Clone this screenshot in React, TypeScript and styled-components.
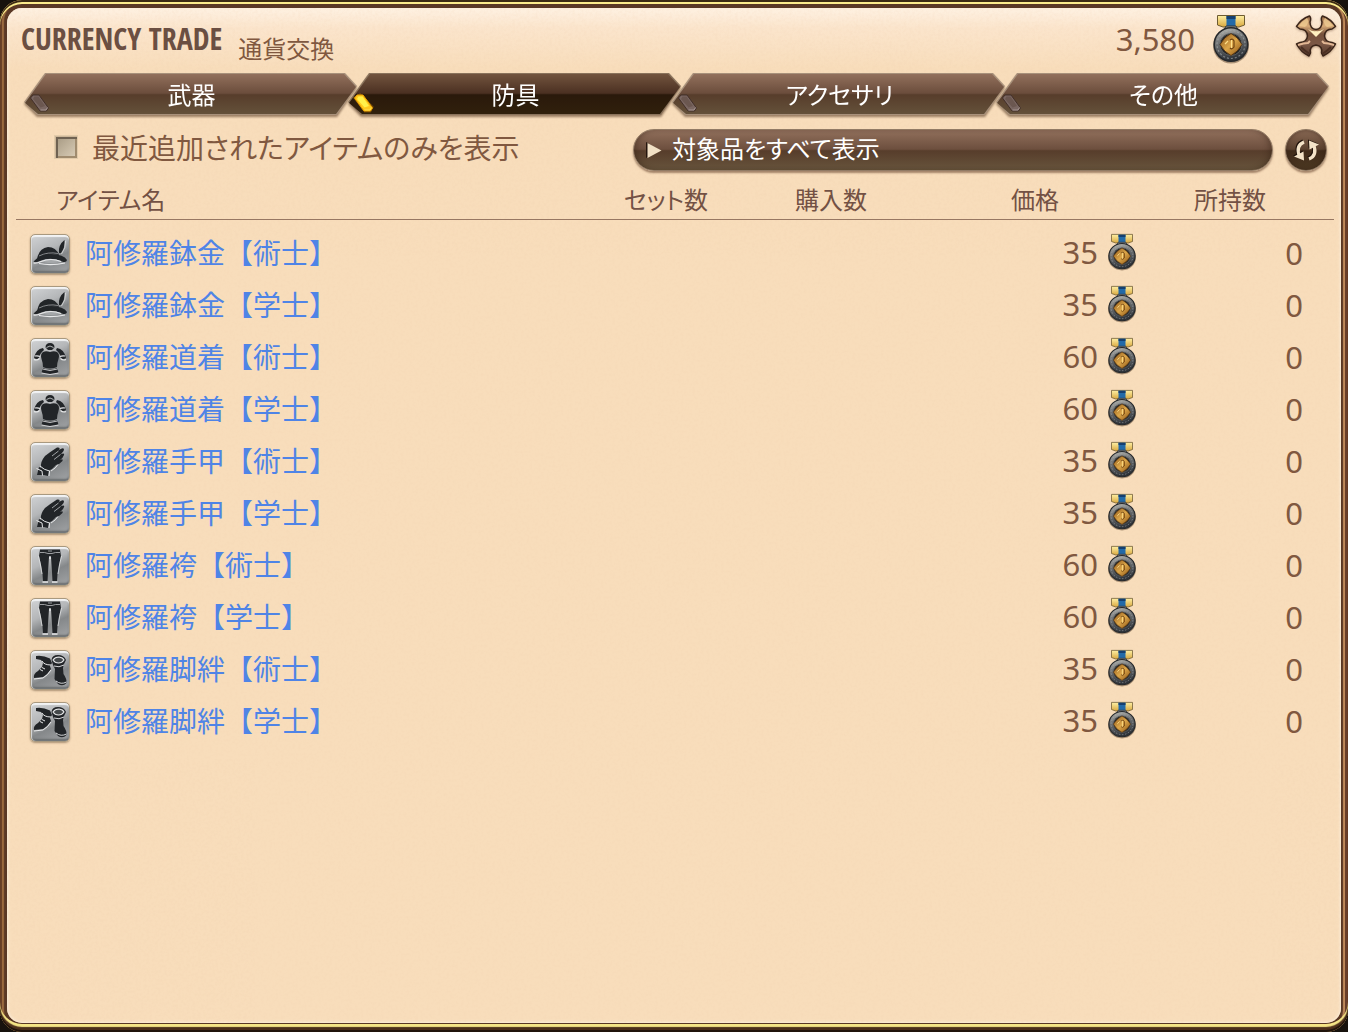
import React, { useState } from 'react';
import styled, { createGlobalStyle } from 'styled-components';

const CJK = '"Noto Sans CJK JP", "Noto Sans", sans-serif';

const GlobalStyle = createGlobalStyle`
  * { box-sizing: border-box; }
  body { margin: 0; background: #17120d; font-family: ${CJK}; font-weight: 400; color: #805840; }
  button, select, input { font: inherit; color: inherit; margin: 0; }
`;

const Frame = styled.div`
  display: flex;
  min-height: 100vh;
  padding: 8px 7px 9px;
  border-radius: 22px;
  background: #5a3825;
  box-shadow:
    inset 0 2px 0 #3b2a14,
    inset 0 -2px 0 #20140c,
    inset 0 4px 0 #fbeb8c,
    inset 0 -5px 1px #4b2e1b,
    inset 0 -8px 0 #f6e687,
    inset 2px 0 0 #6a4128,
    inset -3px 0 0 #6a3f2a,
    inset 4px 0 1px #9a6a3f,
    inset -5px 0 1px #c08a5a;
`;

const Panel = styled.main`
  position: relative;
  flex: 1;
  min-width: 0;
  border-radius: 15px;
  overflow: hidden;
  background: linear-gradient(#fef1e2 0, #fbe5cc 20px, #f8ddbb 60px);
  box-shadow: inset 0 0 3px 1px #fbeedb;
`;

const Grain = styled.svg`
  position: absolute;
  inset: 0;
  width: 100%;
  height: 100%;
  pointer-events: none;
`;

const Header = styled.header`
  position: relative;
  display: flex;
  align-items: center;
  height: 65px;
  padding: 0 4px 4px 14px;
`;

const Title = styled.h1`
  margin: 0;
  font: 700 30px/48px "Open Sans Condensed", "Roboto Condensed", "Open Sans", sans-serif;
  color: #6b4f42;
`;

const Subtitle = styled.p`
  margin: 0 auto 0 16px;
  padding-top: 18px;
  font-size: 24px;
  line-height: 32px;
`;

const Balance = styled.output`
  display: flex;
  align-items: center;
  gap: 18px;
  font: 400 31px/40px "Noto Sans", sans-serif;
`;

const CloseButton = styled.button`
  display: grid;
  place-items: center;
  width: 42px;
  height: 42px;
  margin: 0 0 6px 46px;
  padding: 0;
  border: 0;
  background: none;
  filter: drop-shadow(0 1px 1px #6b4a3380);
`;

const Tabs = styled.div`
  position: relative;
  display: flex;
  padding: 0 12px 0 17px;
`;

const TabSlot = styled.div`
  flex: 1;
  min-width: 0;
  filter: drop-shadow(0 2px 1px #5a3d2899);
  & + & { margin-left: -9px; }
`;

const Tab = styled.button<{ $active: boolean }>`
  --shape: polygon(21px 0, calc(100% - 12px) 0, 100% 13px, calc(100% - 20px) 100%, 13px 100%, 0 29px);
  position: relative;
  display: block;
  width: 100%;
  height: 42px;
  padding: 0 0 0 2px;
  border: 0;
  color: #fff;
  font-size: 24px;
  line-height: 42px;
  font-feature-settings: "palt";
  background: ${p => (p.$active ? '#8a735c' : '#a8917b')};
  clip-path: var(--shape);
  isolation: isolate;

  &::before {
    content: '';
    position: absolute;
    z-index: -1;
    inset: 1px;
    clip-path: var(--shape);
    background: ${p => p.$active
      ? 'linear-gradient(#72543e, #4b3022 48%, #2a190b 52%, #30200c)'
      : 'linear-gradient(#92705c, #6b4d3c 48%, #573d2b 52%, #64513a)'};
  }
`;

const Gem = styled.svg`
  position: absolute;
  left: 4px;
  top: 18px;
`;

const Filters = styled.div`
  position: relative;
  display: grid;
  grid-template-columns: minmax(0, 567fr) minmax(0, 640fr) 42px;
  column-gap: 12px;
  align-items: center;
  padding: 14px 14px 0 47px;
`;

const CheckLabel = styled.label`
  display: flex;
  align-items: center;
  gap: 14px;
  padding-bottom: 6px;
  font-size: 28px;
  line-height: 36px;
  font-feature-settings: "palt";
  white-space: nowrap;
`;

const Check = styled.input`
  appearance: none;
  width: 24px;
  height: 24px;
  border: 1px solid #e2cbaa;
  background: linear-gradient(135deg, #a3967f, #dccfb9);
  box-shadow: inset 1px 1px 0 #cdb799, inset 3px 3px 0 #6f6252, inset -2px -2px 0 #a08b6e;
  &:checked { background: #6b4f42; }
`;

const Picker = styled.div`
  position: relative;
`;

const Select = styled.select`
  appearance: none;
  display: block;
  width: 100%;
  height: 42px;
  padding: 0 20px 4px 38px;
  border: 1px solid #927b65;
  border-radius: 21px;
  color: #fff;
  font-size: 24px;
  line-height: 36px;
  font-feature-settings: "palt";
  background: linear-gradient(#91705c, #6d4f3e 48%, #573d2b 52%, #67543c);
  box-shadow: 0 2px 2px #6b4a3399, inset 5px 0 6px -3px #2e1b1066, inset -5px 0 6px -3px #2e1b1066;
`;

const Arrow = styled.svg`
  position: absolute;
  left: 12px;
  top: 12px;
  pointer-events: none;
`;

const RefreshButton = styled.button`
  width: 42px;
  height: 42px;
  padding: 0;
  border: 1px solid #8d7660;
  border-radius: 50%;
  background: linear-gradient(#8a6a55, #5b412f 48%, #412b1a 52%, #4b3822);
  box-shadow: 0 2px 2px #6b4a3399, inset 0 0 4px #2e1b1088;
`;

const Table = styled.table`
  position: relative;
  table-layout: fixed;
  width: calc(100% - 16px);
  margin: 8px 7px 0 9px;
  border-spacing: 0;

  tbody::before { content: ''; display: block; height: 8px; }
`;

const Th = styled.th<{ $w?: number; $align?: string; $pad?: string }>`
  width: ${p => (p.$w ? `${p.$w}px` : 'auto')};
  padding: ${p => p.$pad ?? '0'};
  border-bottom: 1px solid #977762;
  text-align: ${p => p.$align ?? 'center'};
  font-size: 24px;
  line-height: 40px;
  font-weight: 400;
  font-feature-settings: "palt";
  color: #735144;
`;

const Td = styled.td`
  height: 52px;
  padding: 0;
  vertical-align: middle;
`;

const Item = styled.div`
  display: flex;
  align-items: center;
  gap: 15px;
  padding-left: 14px;
`;

const ItemLink = styled.a`
  padding-bottom: 4px;
  color: #4f84e6;
  font-size: 28px;
  line-height: 36px;
  text-decoration: none;
  white-space: nowrap;
`;

const Tile = styled.span`
  display: block;
  width: 40px;
  height: 40px;
  border: 1px solid #a9997f;
  border-radius: 5px;
  background: linear-gradient(155deg, #d2d4d6 0, #b4b6b8 40%, #85888a 62%, #a2a4a6 100%);
  box-shadow: inset 0 2px 1px #f3f4f5, inset 1px 0 1px #d9dadb, inset 0 -2px 2px #666a6c, 0 1px 2px #6b523a88;
  svg { display: block; width: 38px; height: 38px; }
`;

const Price = styled.div`
  display: flex;
  align-items: center;
  justify-content: flex-end;
  gap: 10px;
  padding: 0 22px 4px 0;
  font: 400 31px/40px "Noto Sans", sans-serif;
`;

const Owned = styled.div`
  padding: 0 31px 2px 0;
  text-align: right;
  font: 400 31px/40px "Noto Sans", sans-serif;
`;

function Medal({ w, h }: { w: number; h: number }) {
  return (
    <svg width={w} height={h} viewBox="0 0 36 48" preserveAspectRatio="none" aria-hidden="true" overflow="visible">
      <defs>
        <linearGradient id="rim" x1="0" y1="0" x2="0.3" y2="1">
          <stop offset="0" stopColor="#c2c2bb" /><stop offset="0.4" stopColor="#77797a" /><stop offset="1" stopColor="#2e3339" />
        </linearGradient>
        <linearGradient id="gold" x1="0" y1="0" x2="1" y2="1">
          <stop offset="0" stopColor="#8b5417" /><stop offset="0.5" stopColor="#dca649" /><stop offset="1" stopColor="#8a5212" />
        </linearGradient>
        <linearGradient id="ribbon" x1="0" x2="0" y1="0" y2="1">
          <stop offset="0" stopColor="#fff0a4" /><stop offset="1" stopColor="#d9a83e" />
        </linearGradient>
      </defs>
      <ellipse cx="18" cy="31" rx="18" ry="17.5" fill="#4a321f" opacity="0.45" />
      <path d="M4.500 0.500H31.500V10L26 12H10L4.500 10Z" fill="url(#ribbon)" stroke="#6d5b32" strokeWidth="1" />
      <path d="M13.500 1H22.500V12H13.500Z" fill="#236aa8" />
      <path d="M13.500 1H22.500V4H13.500Z" fill="#153f70" />
      <path d="M13 11h10l2 4H11Z" fill="#91948f" stroke="#343638" />
      <circle cx="18" cy="29.500" r="16.800" fill="url(#rim)" stroke="#25282b" strokeWidth="1.500" />
      <circle cx="18" cy="29.500" r="14" fill="none" stroke="#a9adae" strokeWidth="1.200" strokeDasharray="2 2" opacity="0.6" />
      <circle cx="18" cy="29.500" r="11" fill="#202326" stroke="#5c6062" strokeWidth="1" />
      <path d="M18 18.500Q25 22 29 29.500Q25 37 18 40.500Q11 37 7 29.500Q11 22 18 18.500Z" fill="url(#gold)" stroke="#4b2c0c" strokeWidth="0.800" strokeLinejoin="round" />
      <path d="M17 25q3-2 4 1v6q-2 3-4 1" fill="none" stroke="#6f4310" strokeWidth="1.200" />
      <path d="M18.500 25v8M12 29l3-3" stroke="#ffe08a" strokeWidth="1.200" />
    </svg>
  );
}

function CloseIcon() {
  return (
    <svg width="42" height="42" viewBox="0 0 42 42" aria-hidden="true">
      <defs>
        <linearGradient id="bronze" x1="0" y1="0" x2="0" y2="1">
          <stop offset="0" stopColor="#9a6d4a" /><stop offset="0.25" stopColor="#d8ab78" /><stop offset="0.45" stopColor="#76513b" /><stop offset="0.7" stopColor="#7a5745" /><stop offset="1" stopColor="#54382b" />
        </linearGradient>
      </defs>
      <path d="M14.500 1Q6 4 1.500 11.500L5 14Q12 14 12.500 21Q12 27 5 27.500L1.500 29Q6 37.500 14 41L15.500 38Q14 31 21 30Q28 31 26.500 38L28 41Q36 37.500 40.500 29L37 27.500Q30 27 29.500 21Q30 14 37 14L40.500 11.500Q36 4 27.500 1Q25.500 3 27 7Q27 14 21 14.500Q15 14 15 7Q16.500 3 14.500 1Z"
        fill="url(#bronze)" stroke="#3b2519" strokeWidth="1.500" strokeLinejoin="round" />
      <path d="M13 14L21 22L29 14Q24 17 21 16Q18 17 13 14Z" fill="#fff0c0" />
      <path d="M12 3Q7 6 4 11L10 12Q13 10 13.500 6ZM30 3Q35 6 38 11L32 12Q29 10 28.500 6Z" fill="#f1cf94" opacity="0.75" />
      <path d="M3 30Q9 28 13 28L15 26M39 30Q33 28 29 28L27 26" fill="none" stroke="#e2b794" strokeWidth="2" />
      <path d="M6 32Q10 36 14 38.500M36 32Q32 36 28 38.500" fill="none" stroke="#4a2f22" strokeWidth="2" />
    </svg>
  );
}

function RefreshArm() {
  return (
    <g>
      <path d="M18 12C12 14.500 11 20 13.500 26.500" fill="none" strokeWidth="3.200" />
      <path d="M8 26.500L18 30.500L17.500 21.500Z" strokeWidth="0" />
    </g>
  );
}

function RefreshIcon() {
  return (
    <svg width="40" height="40" viewBox="0 0 40 40" aria-hidden="true">
      {['#20130b', '#f4e3c8'].map((tone, i) => (
        <g key={tone} fill={tone} stroke={tone} transform={i === 0 ? 'translate(-1 -1)' : undefined}>
          <RefreshArm />
          <g transform="rotate(180 20.500 20.500)"><RefreshArm /></g>
        </g>
      ))}
    </svg>
  );
}

type Kind = 'hat' | 'body' | 'hands' | 'legs' | 'feet';

const INK = '#222528';
const SHINE = '#e8e9ea';

const art: Record<Kind, React.ReactNode> = {
  hat: (
    <>
      <path d="M6 24Q8 13 17 12Q25 12 28 20Q16 18 6 24Z" fill={INK} />
      <path d="M8 21Q17 16.500 27 18.500" fill="none" stroke="#9fa2a4" strokeWidth="0.800" />
      <path d="M2.500 26.500Q8 19.500 20 19Q33 19.500 36 25Q35.500 28 31 26.500Q20 21.500 9 26Q5 28 2.500 26.500Z" fill={INK} />
      <path d="M9 26.500Q20 22 31 26.500Q20 30 9 26.500Z" fill="#a4a7a9" />
      <path d="M2.500 28Q6 28.500 10 26.500Q20 22.500 30 26.500M8 28.500Q20 31 34 28" fill="none" stroke={SHINE} strokeWidth="1.100" />
      <path d="M28 18Q27 10 33.500 5Q34.500 12 30 18Z" fill={INK} />
      <path d="M30.500 19Q35 13 34.500 6" fill="none" stroke={SHINE} strokeWidth="0.700" />
    </>
  ),
  body: (
    <>
      <path d="M14.500 8.500Q14.500 4 19 4Q23.500 4 23.500 8.500L21 11H17Z" fill={INK} />
      <path d="M15.500 8.500Q19 5.500 22.500 8.500" fill="none" stroke="#b4b7b8" />
      <path d="M12 13Q15 11.500 19 13Q23 11.500 26 13Q29 15 27.500 20Q26 24 26 28Q19 31 12 28Q12 24 10.500 20Q9 15 12 13Z" fill={INK} />
      <path d="M12 9Q5 10 3 19Q6 21 8 19Q9 14 13 11ZM26 9Q33 10 35 19Q32 21 30 19Q29 14 25 11Z" fill={INK} />
      <path d="M3 20.500Q6 22 8.500 19.500M35 20.500Q32 22 29.500 19.500M4 17Q7 16.500 9 17.500M34 17Q31 16.500 29 17.500" fill="none" stroke={SHINE} strokeWidth="1.100" />
      <path d="M12 29Q19 32 26 29L27.500 33.500Q19 36.500 10.500 33.500Z" fill={INK} />
      <path d="M11.500 30Q19 33 26.500 30M10.500 34Q19 37 27.500 34" fill="none" stroke={SHINE} strokeWidth="0.800" />
    </>
  ),
  hands: (
    <>
      <path d="M10 25Q9 19 14 13Q19 9 26 4.500Q30 4 28 7Q32.500 4 33 6.500Q33 8 30 11Q34 9.500 33 12Q32 15 29 17Q32.500 15 31.500 18Q29 21 25 22Q22 26 17 28Z" fill={INK} />
      <path d="M27.500 8L21 13M29.500 11.500L23 16.500" fill="none" stroke="#aeb1b3" strokeWidth="0.900" />
      <path d="M8 24L18 28L17 33L13 32L6 32Z" fill={INK} />
      <path d="M5.500 25.500L11 28L11.500 32.500M9 23Q13 27 18.500 28L18 33M20 28Q25 25 27 21.500" fill="none" stroke={SHINE} strokeWidth="1" />
    </>
  ),
  legs: (
    <>
      <path d="M9 2.500H29L30 9L28 18L26.500 27L26 34.500H21.500L21 25L20 10H18L17 25L16.500 34.500H12L11.500 27L10 18L8 9Z" fill={INK} />
      <path d="M9 5.500Q14 5 17 6.500H21Q24 5 29 5.500M17 4H21" fill="none" stroke="#a9acae" strokeWidth="0.900" />
      <path d="M11.500 35H17M21 35H26.500M19 9V12" stroke={SHINE} strokeWidth="1.300" />
      <path d="M7.500 9L9.500 18L11 27M30.500 9L28.500 18L27 27" fill="none" stroke={SHINE} strokeWidth="0.700" />
    </>
  ),
  feet: (
    <>
      <path d="M5 5Q12 4 19 7.500L21 12L19 15L20 18Q17 23 12 26L3 27Q2 23 7 20L11 16L12 12L10 9L5 8Z" fill={INK} />
      <path d="M11 10Q13 14 20 14M3 28L12 27Q17 24 20 19M11 16.500L14 18M9 18.500L12 20" fill="none" stroke={SHINE} strokeWidth="1" />
      <path d="M20.500 9Q21 4 27 4Q33 4 35 9L33 13L32 17L32.500 23Q36 28 35.500 32Q32 36 27 33L23.500 28L24 18L22 14Z" fill={INK} />
      <path d="M22 9Q24 6 28 6Q32 6.500 33 9Q31 12 27.500 12Q24 12 22 9Z" fill="#44484a" stroke={SHINE} strokeWidth="1.100" />
      <path d="M23 15Q28 17 33 14M25 30Q30 34 35.500 31" fill="none" stroke={SHINE} strokeWidth="0.900" />
    </>
  ),
};

const items: { kind: Kind; name: string; price: number }[] = [
  { kind: 'hat', name: '阿修羅鉢金【術士】', price: 35 },
  { kind: 'hat', name: '阿修羅鉢金【学士】', price: 35 },
  { kind: 'body', name: '阿修羅道着【術士】', price: 60 },
  { kind: 'body', name: '阿修羅道着【学士】', price: 60 },
  { kind: 'hands', name: '阿修羅手甲【術士】', price: 35 },
  { kind: 'hands', name: '阿修羅手甲【学士】', price: 35 },
  { kind: 'legs', name: '阿修羅袴【術士】', price: 60 },
  { kind: 'legs', name: '阿修羅袴【学士】', price: 60 },
  { kind: 'feet', name: '阿修羅脚絆【術士】', price: 35 },
  { kind: 'feet', name: '阿修羅脚絆【学士】', price: 35 },
];

const tabs = ['武器', '防具', 'アクセサリ', 'その他'];

function TabGem({ lit }: { lit: boolean }) {
  return (
    <Gem width="26" height="24" viewBox="0 0 26 24" aria-hidden="true">
      {lit && <path d="M3 7L8 4L20 16L18 20H13Z" fill="#c57a05" opacity="0.4" stroke="#c57a05" strokeWidth="3" />}
      <path d="M2.500 7L5 4H11L20.500 17L18.500 20H12Z" fill={lit ? '#ffc81e' : '#7a6762'} stroke={lit ? '#e8a000' : '#43302a'} strokeWidth="1" strokeLinejoin="round" />
      <path d="M5 8L6.500 5.500H10.500L17 15L12.500 16.500Z" fill={lit ? '#fff04a' : '#6b5750'} />
      <path d="M12.500 19H18L19.500 16.500" fill="none" stroke={lit ? '#ffdf50' : '#a59590'} strokeWidth="1" />
    </Gem>
  );
}

export default function App() {
  const [active, setActive] = useState(1);
  return (
    <>
      <GlobalStyle />
      <Frame>
        <Panel>
          <Grain aria-hidden="true">
            <filter id="grain">
              <feTurbulence type="fractalNoise" baseFrequency="0.35" numOctaves="2" seed="4" />
              <feColorMatrix values="0 0 0 0 0.85  0 0 0 0 0.6  0 0 0 0 0.4  0.9 0 0 0 -0.38" />
            </filter>
            <rect width="100%" height="100%" filter="url(#grain)" opacity="0.35" />
          </Grain>
          <Header>
            <Title>CURRENCY TRADE</Title>
            <Subtitle>通貨交換</Subtitle>
            <Balance>3,580<Medal w={36} h={48} /></Balance>
            <CloseButton aria-label="閉じる"><CloseIcon /></CloseButton>
          </Header>
          <Tabs role="tablist">
            {tabs.map((name, i) => (
              <TabSlot key={name}>
                <Tab role="tab" aria-selected={i === active} $active={i === active} onClick={() => setActive(i)}>
                  <TabGem lit={i === active} />
                  {name}
                </Tab>
              </TabSlot>
            ))}
          </Tabs>
          <Filters>
            <CheckLabel>
              <Check type="checkbox" />
              最近追加されたアイテムのみを表示
            </CheckLabel>
            <Picker>
              <Select aria-label="表示対象"><option>対象品をすべて表示</option></Select>
              <Arrow width="18" height="18" viewBox="0 0 18 18" aria-hidden="true">
                <path d="M1 1L14 9L1 17Z" fill="#24150d" />
                <path d="M2.500 2L16.500 9.500L2.500 17Z" fill="#f1e0c5" />
              </Arrow>
            </Picker>
            <RefreshButton aria-label="更新"><RefreshIcon /></RefreshButton>
          </Filters>
          <Table>
            <thead>
              <tr>
                <Th $align="left" $pad="0 0 0 40px">アイテム名</Th>
                <Th $w={168}>セット数</Th>
                <Th $w={162}>購入数</Th>
                <Th $w={246}>価格</Th>
                <Th $w={176} $align="right" $pad="0 68px 0 0">所持数</Th>
              </tr>
            </thead>
            <tbody>
              {items.map(item => (
                <tr key={item.name}>
                  <Td>
                    <Item>
                      <Tile><svg viewBox="0 0 38 38" aria-hidden="true">{art[item.kind]}</svg></Tile>
                      <ItemLink href="#">{item.name}</ItemLink>
                    </Item>
                  </Td>
                  <Td />
                  <Td />
                  <Td><Price>{item.price}<Medal w={28} h={36} /></Price></Td>
                  <Td><Owned>0</Owned></Td>
                </tr>
              ))}
            </tbody>
          </Table>
        </Panel>
      </Frame>
    </>
  );
}
